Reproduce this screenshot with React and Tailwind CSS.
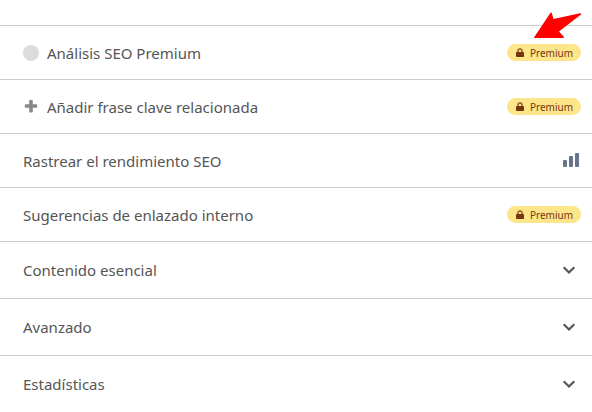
import clsx from "clsx";

const rows = [
  { label: "Análisis SEO Premium", lead: "dot", trail: "premium" },
  { label: "Añadir frase clave relacionada", lead: "plus", trail: "premium" },
  { label: "Rastrear el rendimiento SEO", trail: "bars" },
  { label: "Sugerencias de enlazado interno", trail: "premium" },
  { label: "Contenido esencial", trail: "chevron" },
  { label: "Avanzado", trail: "chevron" },
  { label: "Estadísticas", trail: "chevron" },
];

function PremiumBadge() {
  return (
    <span className="flex h-[17px] items-center gap-[5px] rounded-full bg-[#fde68a] px-2 text-[10px] leading-4 text-[#78350f]">
      <svg className="h-[10px] w-[10px]" viewBox="0 0 10 10" aria-hidden="true">
        <path d="M3 5V2.800a2 2 0 0 1 4 0V5" fill="none" stroke="#78350f" strokeWidth="1.2" />
        <rect x="1" y="4" width="8" height="5" rx="0.8" fill="#78350f" />
      </svg>
      Premium
    </span>
  );
}

function LeadIcon({ type }) {
  if (type === "dot") {
    return <span className="h-4 w-4 rounded-full bg-[#dcdcdc]" />;
  }
  return (
    <svg className="h-4 w-4" viewBox="0 0 16 16" aria-hidden="true">
      <path
        d="M7.100 1h1.800q.9 0 .9.9V5.200h3.500q.9 0 .9.9v1.800q0 .9-.9.9H9.800v3.700q0 .9-.9.9H7.100q-.9 0-.9-.9V8.800H2.700q-.9 0-.9-.9V6.100q0-.9.9-.9H6.200V1.900q0-.9.9-.9z"
        fill="#888"
      />
    </svg>
  );
}

function TrailIcon({ type }) {
  if (type === "premium") return <PremiumBadge />;
  if (type === "bars") {
    return (
      <svg className="h-5 w-5" viewBox="0 0 20 20" fill="#64748b" aria-hidden="true">
        <rect x="2" y="9" width="4" height="7" rx="1" />
        <rect x="8" y="5" width="4" height="11" rx="1" />
        <rect x="14" y="2" width="4" height="14" rx="1" />
      </svg>
    );
  }
  return (
    <svg className="h-6 w-6" viewBox="0 0 24 24" fill="none" aria-hidden="true">
      <path d="M6.700 9.300 12 14.500l5.300-5.200" stroke="#555" strokeWidth="2.200" />
    </svg>
  );
}

function Row({ label, lead, trail }) {
  return (
    <button
      type="button"
      className={clsx(
        "flex w-full items-center justify-between border-t border-[#ccc] pr-[11px] pl-[23px] text-left",
        trail === "chevron" ? "h-[57px]" : "h-[54px]"
      )}
    >
      <span className="flex items-center gap-2">
        {lead && <LeadIcon type={lead} />}
        <span className="text-[15px] leading-5">{label}</span>
      </span>
      <TrailIcon type={trail} />
    </button>
  );
}

export default function App() {
  return (
    <main className="relative bg-white pt-[25px] font-['Noto_Sans',sans-serif] text-[#555]">
      {rows.map((row) => (
        <Row key={row.label} {...row} />
      ))}
      {/* red pointer over the first badge */}
      <svg className="absolute top-3 right-2.5 h-[27px] w-[49px]" viewBox="0 0 49 27" aria-hidden="true">
        <path
          d="M1 25.500 17.500.8q.9-.7 1.400.5l1.600 5.700L47 1.200q1.800-.1 1 1.300L26 19.500l5 5.500q.3 1-1 1H2q-1.200 0-1-.5z"
          fill="#f00"
        />
      </svg>
    </main>
  );
}
